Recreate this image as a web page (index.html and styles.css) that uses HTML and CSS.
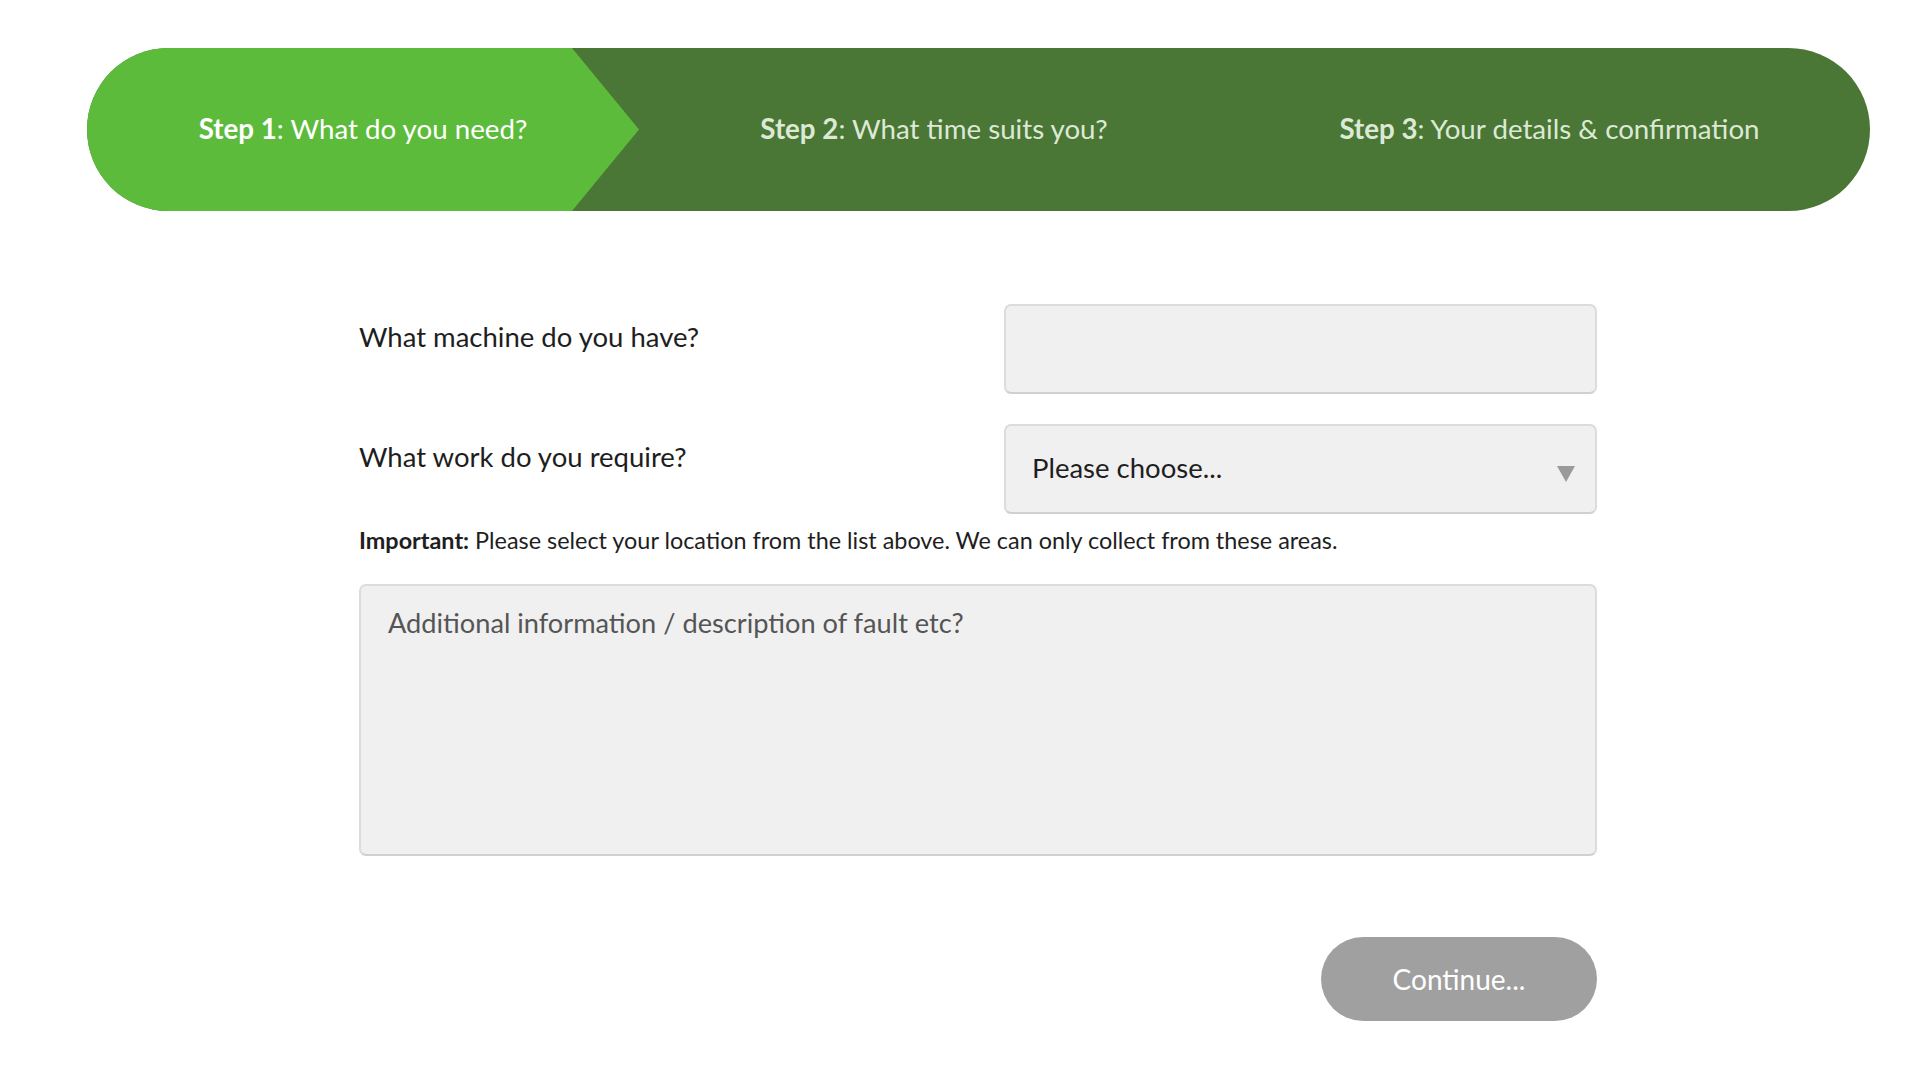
FILE: index.html
```html
<!DOCTYPE html>
<html lang="en">
<head>
<meta charset="utf-8">
<title>Booking - Step 1</title>
<link rel="stylesheet" href="styles.css">
</head>
<body>
<div class="page">
  <nav class="steps">
    <div class="step step-active"><span><b>Step 1</b>: What do you need?</span></div>
    <div class="step step-two"><span><b>Step 2</b>: What time suits you?</span></div>
    <div class="step step-three"><span><b>Step 3</b>: Your details &amp; confirmation</span></div>
  </nav>

  <form class="form">
    <div class="row">
      <label class="label" for="machine">What machine do you have?</label>
      <input class="field" id="machine" type="text">
    </div>
    <div class="row">
      <label class="label" for="work">What work do you require?</label>
      <div class="select">
        <span class="select-text">Please choose...</span>
        <span class="caret"></span>
      </div>
    </div>
    <p class="note"><b>Important:</b> Please select your location from the list above. We can only collect from these areas.</p>
    <textarea class="textarea" placeholder="Additional information / description of fault etc?"></textarea>
    <div class="actions">
      <button type="button" class="btn">Continue...</button>
    </div>
  </form>
</div>
</body>
</html>
```

FILE: styles.css
```css
* { box-sizing: border-box; }
html, body { margin: 0; padding: 0; background: #fff; }
body {
  font-family: "Lato", "Open Sans", sans-serif;
  color: #1e1e1e;
}
.page {
  width: 1783px;
  margin-left: 87px;
  padding-top: 48px;
}
.steps {
  display: flex;
  height: 163px;
  border-radius: 82px;
  overflow: hidden;
  background: #4a7736;
}
.step {
  display: flex;
  align-items: center;
  justify-content: center;
  font-size: 27.7px;
  color: #dde9d5;
  white-space: nowrap;
  padding-bottom: 3px;
}
.step b { font-weight: 700; }
.step-active {
  width: 552px;
  background: #5dbb3c;
  color: #fff;
  clip-path: polygon(0 0, 485px 0, 100% 50%, 485px 100%, 0 100%);
}
.step-two { width: 590px; }
.step-three { width: 641px; }

.form {
  width: 1238px;
  margin: 93px auto 0 272px;
}
.row {
  display: flex;
  justify-content: space-between;
  margin-bottom: 30px;
}
.label {
  font-size: 27.5px;
  padding-top: 16px;
  color: #1e1e1e;
}
.field, .select {
  width: 593px;
  height: 90px;
  background: #f0f0f0;
  border: 2px solid #dcdcdc;
  border-bottom-color: #d0d0d0;
  border-radius: 7px;
}
.select {
  display: flex;
  align-items: center;
  justify-content: space-between;
  padding: 0 20px 4px 26px;
}
.select-text {
  font-size: 27.5px;
  color: #1e1e1e;
}
.caret {
  width: 0;
  height: 0;
  border-left: 9px solid transparent;
  border-right: 9px solid transparent;
  border-top: 16px solid #9a9a9a;
  margin-top: 14px;
}
.note {
  margin: -18px 0 30px;
  font-size: 23.4px;
  color: #1e1e1e;
}
.note b { font-weight: 700; }
.textarea {
  display: block;
  width: 1238px;
  height: 272px;
  background: #f0f0f0;
  border: 2px solid #dcdcdc;
  border-bottom-color: #d0d0d0;
  border-radius: 7px;
  padding: 20px 27px;
  font-family: inherit;
  font-size: 27.2px;
  resize: none;
}
.textarea::placeholder { color: #555; }
.actions {
  display: flex;
  justify-content: flex-end;
  margin-top: 81px;
}
.btn {
  width: 276px;
  height: 84px;
  border: none;
  border-radius: 42px;
  background: #a0a0a0;
  color: #fff;
  font-family: inherit;
  font-size: 28px;
}
```
